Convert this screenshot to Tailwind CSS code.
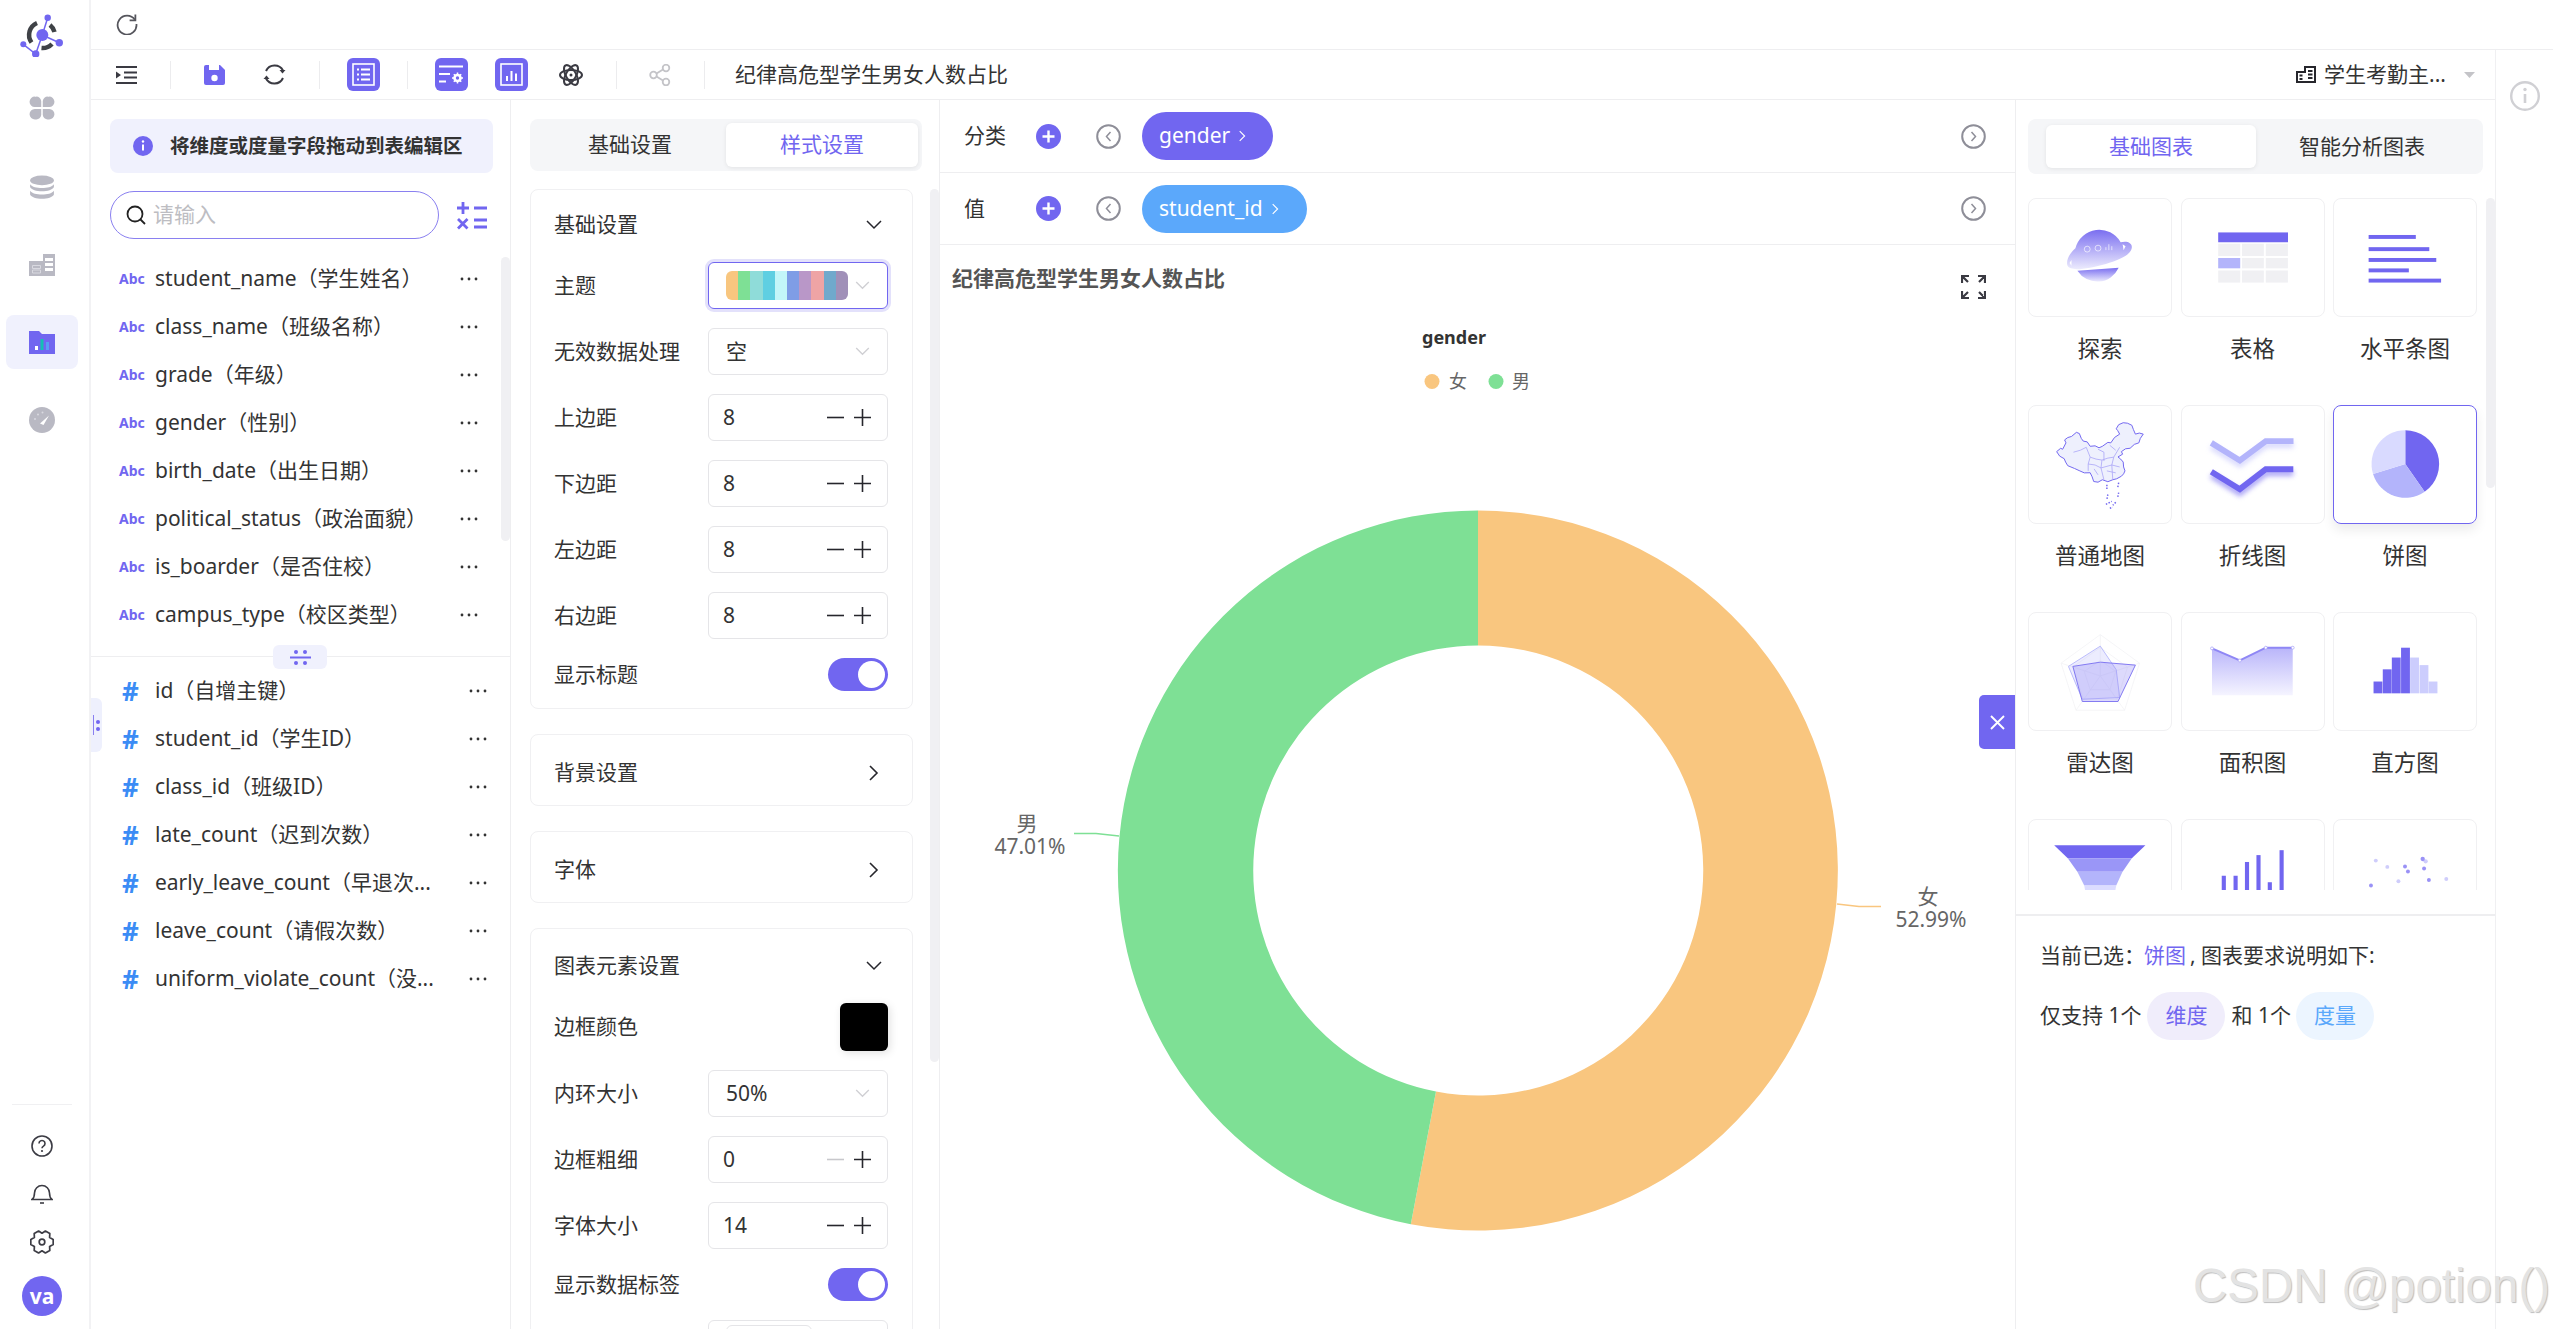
<!DOCTYPE html>
<html lang="zh-CN">
<head>
<meta charset="utf-8">
<title>图表编辑</title>
<script src="https://cdn.jsdelivr.net/npm/@tailwindcss/browser@4"></script>
</head>
<body class="bg-white">
<svg width="0" height="0" class="absolute">
  <defs>
    <symbol id="chev-d" viewBox="0 0 16 10"><path d="M1 1l7 7 7-7" fill="none" stroke="currentColor" stroke-width="1.5"/></symbol>
    <symbol id="chev-r" viewBox="0 0 10 16"><path d="M1 1l7 7-7 7" fill="none" stroke="currentColor" stroke-width="1.6"/></symbol>
    <symbol id="minus" viewBox="0 0 17 17"><path d="M0 8.5h17" stroke="currentColor" stroke-width="1.6"/></symbol>
    <symbol id="plus" viewBox="0 0 17 17"><path d="M0 8.5h17M8.500 0v17" stroke="currentColor" stroke-width="1.6"/></symbol>
    <symbol id="dots" viewBox="0 0 18 4"><circle cx="2" cy="2" r="1.400" fill="currentColor"/><circle cx="9" cy="2" r="1.400" fill="currentColor"/><circle cx="16" cy="2" r="1.400" fill="currentColor"/></symbol>
    <symbol id="add" viewBox="0 0 25 25"><circle cx="12.500" cy="12.500" r="12.500" fill="#7166f0"/><path d="M12.500 6.500v12M6.500 12.500h12" stroke="#fff" stroke-width="2.400"/></symbol>
    <symbol id="circ-l" viewBox="0 0 25 25"><circle cx="12.500" cy="12.500" r="11.300" fill="none" stroke="#8e8e98" stroke-width="2"/><path d="M14.500 8l-4 4.500 4 4.500" fill="none" stroke="#8e8e98" stroke-width="1.500"/></symbol>
    <symbol id="circ-r" viewBox="0 0 25 25"><circle cx="12.500" cy="12.500" r="11.300" fill="none" stroke="#8e8e98" stroke-width="2"/><path d="M10.500 8l4 4.500-4 4.500" fill="none" stroke="#8e8e98" stroke-width="1.500"/></symbol>
    <linearGradient id="planetG" x1="0" y1="0" x2="0" y2="1"><stop offset="0" stop-color="#7a6ef0"/><stop offset="1" stop-color="#ecebfd"/></linearGradient>
    <linearGradient id="areaG" x1="0" y1="0" x2="0" y2="1"><stop offset="0" stop-color="#b9b5fa"/><stop offset="1" stop-color="#f5f4ff"/></linearGradient>
    <filter id="soft" x="-20%" y="-60%" width="140%" height="220%"><feGaussianBlur stdDeviation="2.500"/></filter>
  </defs>
</svg>

<div class="relative flex w-[2553px] h-[1329px] overflow-hidden bg-white text-[21px] text-[#333] font-['Noto_Sans','Noto_Sans_CJK_SC',sans-serif]">

  <!-- sidebar -->
  <aside class="w-[91px] shrink-0 h-full border-r-2 border-[#f2f2f4] pr-[5px] flex flex-col items-center">
    <svg class="mt-[13px] w-[44px] h-[44px]" viewBox="20 13 44 44">
      <path d="M37 23A13 13 0 0 0 31.500 42.500M50 25A13 13 0 0 1 54.500 32M41.500 48A13 13 0 0 0 52 44" fill="none" stroke="#3f4247" stroke-width="4.500"/>
      <path d="M42.300 35L47.700 17.700M42.300 35L59.300 42.700M42.300 35L35.700 54L23.300 44.300" fill="none" stroke="#7166f0" stroke-width="1.500"/>
      <circle cx="42.300" cy="35" r="6" fill="#7166f0"/><circle cx="47.700" cy="17.700" r="3.200" fill="#7166f0"/><circle cx="59.300" cy="42.700" r="3.700" fill="#7166f0"/><circle cx="35.700" cy="54" r="3.700" fill="#7166f0"/><circle cx="23.300" cy="44.300" r="3" fill="#7166f0"/>
    </svg>
    <svg class="mt-[38px] w-[26px] h-[26px]" viewBox="0 0 24 24" fill="#b9b9c3"><path d="M11.300 11V5.500A4.500 4.500 0 0 0 6.500 1.500H5.500A5 5 0 0 0 .5 6.200 4.800 4.800 0 0 0 5.300 11ZM12.700 11V5.500A4.500 4.500 0 0 1 17.500 1.500H18.500A5 5 0 0 1 23.500 6.200 4.800 4.800 0 0 1 18.700 11ZM11.300 13V18.500A4.500 4.500 0 0 1 6.500 22.500H5.500A5 5 0 0 1 .5 17.800 4.800 4.800 0 0 1 5.300 13ZM12.700 13V18.500A4.500 4.500 0 0 0 17.500 22.500H18.500A5 5 0 0 0 23.500 17.800 4.800 4.800 0 0 0 18.700 13Z"/></svg>
    <svg class="mt-[54px] w-[26px] h-[26px]" viewBox="0 0 24 24" fill="#b9b9c3"><ellipse cx="12" cy="5" rx="11" ry="4.500"/><path d="M1 8.500C3 11 7 12 12 12s9-1 11-3.500V11c-1 2.500-6 4-11 4S2 13.500 1 11ZM1 14.500C3 17 7 18 12 18s9-1 11-3.500V18c-1 2.500-6 4-11 4S2 20.500 1 18Z"/></svg>
    <svg class="mt-[53px] w-[26px] h-[22px]" viewBox="0 0 26 22" fill="#b9b9c3"><path d="M0 7h14V0h12v22H0Z"/><path d="M16 4h8v3h-8zM16 9h8v3h-8zM16 14h8v3h-8z" fill="#fff"/><path d="M3.500 11.500h8v3h-8zM3.500 16h8v3h-8z" fill="none" stroke="#d9d9e0" stroke-width="1"/></svg>
    <div class="mt-[39px] w-[72px] h-[54px] rounded-[8px] bg-[#f0f1fd] flex items-center justify-center">
      <svg class="w-[26px] h-[24px]" viewBox="0 0 26 24"><path d="M0 1h10l3 3h13v20H0Z" fill="#7166f0"/><rect x="6" y="16" width="3" height="4" fill="#fff"/><rect x="11.500" y="9" width="3" height="11" fill="#14c0b4"/><rect x="17" y="12" width="3" height="8" fill="#5b9cf5"/></svg>
    </div>
    <svg class="mt-[38px] w-[26px] h-[26px]" viewBox="0 0 26 26"><circle cx="13" cy="13" r="13" fill="#b9b9c3"/><path d="M11 16.500L20 8.500 14.500 18Z" fill="#fff"/><circle cx="6" cy="12" r="1" fill="#d9d9e0"/><circle cx="9" cy="7.500" r="1" fill="#d9d9e0"/><circle cx="13.500" cy="5.500" r="1" fill="#d9d9e0"/></svg>
    <div class="mt-auto w-[60px] border-t border-[#f0f0f2]"></div>
    <svg class="mt-[30px] w-[22px] h-[22px]" viewBox="0 0 22 22"><circle cx="11" cy="11" r="10" fill="none" stroke="#3c3c44" stroke-width="1.600"/><path d="M8 8.500a3 3 0 1 1 4.500 2.600c-1 .6-1.500 1-1.500 2.200" fill="none" stroke="#3c3c44" stroke-width="1.600"/><circle cx="11" cy="16" r="1.100" fill="#3c3c44"/></svg>
    <svg class="mt-[24px] w-[22px] h-[24px]" viewBox="0 0 22 24" fill="none" stroke="#3c3c44" stroke-width="1.600"><path d="M1 18.500c2-1.500 2.500-3 2.500-6.500a7.500 7.500 0 0 1 15 0c0 3.500.5 5 2.500 6.500Z"/><path d="M9 22h4"/></svg>
    <svg class="mt-[25px] w-[24px] h-[24px]" viewBox="0 0 24 24" fill="none" stroke="#3c3c44" stroke-width="1.700" stroke-linejoin="round"><path d="M23.200 9.400V14.600L19.600 16.400 19.800 20.400 15.400 23 12 20.800 8.600 23 4.200 20.400 4.400 16.400 .8 14.600V9.400L4.400 7.600 4.200 3.600 8.600 1 12 3.200 15.400 1 19.800 3.600 19.600 7.600Z"/><circle cx="12" cy="12" r="2.800"/></svg>
    <div class="mt-[22px] mb-[13px] w-[40px] h-[40px] rounded-full bg-[#7166f0] text-white font-bold text-[21px] leading-none flex items-center justify-center">va</div>
  </aside>

  <div class="flex-1 min-w-0 flex flex-col">
    <!-- top strip -->
    <div class="h-[50px] shrink-0 border-b border-[#eeeef0] pl-[25px] flex items-center">
      <svg class="w-[22px] h-[22px] -mt-[2px]" viewBox="0 0 21 21" fill="none" stroke="#55555c" stroke-width="1.700"><path d="M18 6.500A9 9 0 1 0 19.500 10.500"/><path d="M18.500 1.500v5.500h-5.500"/></svg>
    </div>

    <div class="flex-1 min-h-0 flex">
      <div class="w-[2405px] shrink-0 flex flex-col border-r border-[#f0f0f2]">
        <!-- toolbar -->
        <div class="h-[50px] shrink-0 border-b border-[#eeeef0] pl-[25px] pr-[20px] flex items-center">
          <svg class="w-[21px] h-[20px]" viewBox="0 0 21 20" fill="#3a3a42"><path d="M0 1h21v2H0zM8 6.500h13v2H8zM8 11.500h13v2H8zM0 17h21v2H0zM0 6.500L5 10l-5 3.500Z"/></svg>
          <span class="ml-[33px] w-px h-[28px] bg-[#ececee]"></span>
          <svg class="ml-[33px] w-[21px] h-[20px]" viewBox="0 0 21 20"><path d="M2 0h14l5 5v13a2 2 0 0 1-2 2H2a2 2 0 0 1-2-2V2a2 2 0 0 1 2-2Z" fill="#7166f0"/><rect x="5" y="0" width="10" height="5" fill="#fff"/><circle cx="10.500" cy="13" r="3.200" fill="#fff"/></svg>
          <svg class="ml-[38px] w-[23px] h-[23px]" viewBox="0 0 23 23" fill="none" stroke="#3a3a42" stroke-width="2"><path d="M3 8A9.500 9.500 0 0 1 20 7.500M20 15A9.500 9.500 0 0 1 3 15.500"/><path d="M16.500 7h6l-3 3.500Z" fill="#3a3a42" stroke="none"/><path d="M6.500 16h-6l3-3.500Z" fill="#3a3a42" stroke="none"/></svg>
          <span class="ml-[33px] w-px h-[28px] bg-[#ececee]"></span>
          <span class="ml-[27px] w-[33px] h-[33px] rounded-[6px] bg-[#7166f0] flex items-center justify-center">
            <svg class="w-[23px] h-[23px]" viewBox="0 0 23 23" fill="none" stroke="#fff" stroke-width="1.600"><rect x="1" y="1" width="21" height="21"/><path d="M5 6.500h2M9 6.500h9M5 11.500h2M9 11.500h9M5 16.500h2M9 16.500h9" stroke-width="2"/></svg>
          </span>
          <span class="ml-[27px] w-px h-[28px] bg-[#ececee]"></span>
          <span class="ml-[27px] w-[33px] h-[33px] rounded-[6px] bg-[#7166f0] flex items-center justify-center">
            <svg class="w-[25px] h-[20px]" viewBox="0 0 25 20" fill="none" stroke="#fff" stroke-width="2"><path d="M0 1.500h24M0 9h11M0 16.500h7"/><circle cx="18.500" cy="13" r="3" stroke-width="2.600"/><path d="M18.500 7.500v2M18.500 16.500v2M13 13h2M22 13h2M14.800 9.300l1.300 1.300M20.900 15.400l1.300 1.300M14.800 16.700l1.300-1.300M20.900 10.600l1.300-1.300" stroke-width="1.500"/></svg>
          </span>
          <span class="ml-[27px] w-[33px] h-[33px] rounded-[6px] bg-[#7166f0] flex items-center justify-center">
            <svg class="w-[23px] h-[23px]" viewBox="0 0 23 23" fill="none" stroke="#fff" stroke-width="1.600"><rect x="1" y="1" width="21" height="21"/><path d="M7 13v5M11.500 8v10M16 10.500v7.500" stroke-width="2"/></svg>
          </span>
          <svg class="ml-[31px] w-[24px] h-[24px]" viewBox="0 0 24 24" fill="none" stroke="#3a3a42" stroke-width="2"><ellipse cx="12" cy="12" rx="11" ry="5"/><ellipse cx="12" cy="12" rx="11" ry="5" transform="rotate(60 12 12)"/><ellipse cx="12" cy="12" rx="11" ry="5" transform="rotate(120 12 12)"/><circle cx="12" cy="12" r="1.500" fill="#3a3a42" stroke="none"/></svg>
          <span class="ml-[33px] w-px h-[28px] bg-[#ececee]"></span>
          <svg class="ml-[32px] w-[22px] h-[22px]" viewBox="0 0 22 22" fill="none" stroke="#c4c4c8" stroke-width="1.800"><circle cx="4.500" cy="11" r="3.300"/><circle cx="17" cy="4" r="3.300"/><circle cx="17" cy="18" r="3.300"/><path d="M7.500 9.500l6.500-4M7.500 12.500l6.500 4"/></svg>
          <span class="ml-[33px] w-px h-[28px] bg-[#ececee]"></span>
          <span class="ml-[30px]">纪律高危型学生男女人数占比</span>
          <svg class="ml-auto w-[20px] h-[17px]" viewBox="0 0 20 17"><path d="M1 6h8v-5h10v15H1Z" fill="none" stroke="#26262c" stroke-width="2"/><path d="M3.500 9.500h3M3.500 13h3M12 5h4.500M12 8.500h4.500M12 12h4.500" stroke="#26262c" stroke-width="2.200"/></svg>
          <span class="ml-[8px] w-[122px]">学生考勤主...</span>
          <svg class="ml-[18px] w-[11px] h-[6px]" viewBox="0 0 11 6"><path d="M0 0h11L5.500 6Z" fill="#c4c4c8"/></svg>
        </div>

        <div class="flex-1 min-h-0 flex">
          <!-- field panel -->
          <section class="relative w-[420px] shrink-0 border-r border-[#eeeef0]">
            <div class="ml-[19px] mt-[19px] w-[383px] h-[54px] rounded-[8px] bg-[#f0f1fd] flex items-center pl-[23px]">
              <svg class="w-[20px] h-[20px]" viewBox="0 0 20 20"><circle cx="10" cy="10" r="10" fill="#7166f0"/><path d="M10 8.500v6" stroke="#fff" stroke-width="2"/><circle cx="10" cy="5.500" r="1.200" fill="#fff"/></svg>
              <span class="ml-[17px] text-[19.500px] font-bold text-[#333]">将维度或度量字段拖动到表编辑区</span>
            </div>
            <div class="mt-[18px] ml-[19px] flex items-center">
              <div class="w-[329px] h-[48px] rounded-full border-[1.500px] border-[#8a80f0] flex items-center pl-[15px]">
                <svg class="w-[20px] h-[20px]" viewBox="0 0 20 20" fill="none" stroke="#222" stroke-width="1.800"><circle cx="9" cy="9" r="7.500"/><path d="M14.500 14.500L19 19"/></svg>
                <span class="ml-[7px] text-[#bdbdc2]">请输入</span>
              </div>
              <svg class="ml-[18px] w-[30px] h-[29px]" viewBox="0 0 30 29" fill="none" stroke="#7166f0" stroke-width="2.800"><path d="M0 7h12M6 1v12M17 7h13M1 18l9.500 9.500M10.500 18L1 27.500M17 19h13M17 26h13"/></svg>
            </div>

            <div class="mt-[16px]">
              <div class="h-[48px] flex items-center pl-[28px] pr-[32px]"><span class="w-[36px] text-[14px] font-bold text-[#7166f0] leading-none">Abc</span><span class="flex-1 whitespace-nowrap">student_name（学生姓名）</span><svg class="w-[18px] h-[4px] text-[#333]"><use href="#dots"/></svg></div>
              <div class="h-[48px] flex items-center pl-[28px] pr-[32px]"><span class="w-[36px] text-[14px] font-bold text-[#7166f0] leading-none">Abc</span><span class="flex-1 whitespace-nowrap">class_name（班级名称）</span><svg class="w-[18px] h-[4px] text-[#333]"><use href="#dots"/></svg></div>
              <div class="h-[48px] flex items-center pl-[28px] pr-[32px]"><span class="w-[36px] text-[14px] font-bold text-[#7166f0] leading-none">Abc</span><span class="flex-1 whitespace-nowrap">grade（年级）</span><svg class="w-[18px] h-[4px] text-[#333]"><use href="#dots"/></svg></div>
              <div class="h-[48px] flex items-center pl-[28px] pr-[32px]"><span class="w-[36px] text-[14px] font-bold text-[#7166f0] leading-none">Abc</span><span class="flex-1 whitespace-nowrap">gender（性别）</span><svg class="w-[18px] h-[4px] text-[#333]"><use href="#dots"/></svg></div>
              <div class="h-[48px] flex items-center pl-[28px] pr-[32px]"><span class="w-[36px] text-[14px] font-bold text-[#7166f0] leading-none">Abc</span><span class="flex-1 whitespace-nowrap">birth_date（出生日期）</span><svg class="w-[18px] h-[4px] text-[#333]"><use href="#dots"/></svg></div>
              <div class="h-[48px] flex items-center pl-[28px] pr-[32px]"><span class="w-[36px] text-[14px] font-bold text-[#7166f0] leading-none">Abc</span><span class="flex-1 whitespace-nowrap">political_status（政治面貌）</span><svg class="w-[18px] h-[4px] text-[#333]"><use href="#dots"/></svg></div>
              <div class="h-[48px] flex items-center pl-[28px] pr-[32px]"><span class="w-[36px] text-[14px] font-bold text-[#7166f0] leading-none">Abc</span><span class="flex-1 whitespace-nowrap">is_boarder（是否住校）</span><svg class="w-[18px] h-[4px] text-[#333]"><use href="#dots"/></svg></div>
              <div class="h-[48px] flex items-center pl-[28px] pr-[32px]"><span class="w-[36px] text-[14px] font-bold text-[#7166f0] leading-none">Abc</span><span class="flex-1 whitespace-nowrap">campus_type（校区类型）</span><svg class="w-[18px] h-[4px] text-[#333]"><use href="#dots"/></svg></div>
            </div>

            <div class="relative mt-[17px] border-t border-[#eeeef0]">
              <div class="absolute left-[182px] -top-[12px] w-[54px] h-[24px] rounded-[6px] bg-[#f0f1fd] flex items-center justify-center">
                <svg class="w-[21px] h-[15px]" viewBox="0 0 21 15" fill="#7166f0"><circle cx="6" cy="2" r="2"/><circle cx="15" cy="2" r="2"/><rect x="0" y="6.500" width="21" height="2"/><circle cx="6" cy="13" r="2"/><circle cx="15" cy="13" r="2"/></svg>
              </div>
            </div>

            <div class="mt-[10px]">
              <div class="h-[48px] flex items-center pl-[31px] pr-[23px]"><span class="w-[33px] text-[26px] font-bold text-[#3b8cf5] leading-none">#</span><span class="flex-1 whitespace-nowrap">id（自增主键）</span><svg class="w-[18px] h-[4px] text-[#333]"><use href="#dots"/></svg></div>
              <div class="h-[48px] flex items-center pl-[31px] pr-[23px]"><span class="w-[33px] text-[26px] font-bold text-[#3b8cf5] leading-none">#</span><span class="flex-1 whitespace-nowrap">student_id（学生ID）</span><svg class="w-[18px] h-[4px] text-[#333]"><use href="#dots"/></svg></div>
              <div class="h-[48px] flex items-center pl-[31px] pr-[23px]"><span class="w-[33px] text-[26px] font-bold text-[#3b8cf5] leading-none">#</span><span class="flex-1 whitespace-nowrap">class_id（班级ID）</span><svg class="w-[18px] h-[4px] text-[#333]"><use href="#dots"/></svg></div>
              <div class="h-[48px] flex items-center pl-[31px] pr-[23px]"><span class="w-[33px] text-[26px] font-bold text-[#3b8cf5] leading-none">#</span><span class="flex-1 whitespace-nowrap">late_count（迟到次数）</span><svg class="w-[18px] h-[4px] text-[#333]"><use href="#dots"/></svg></div>
              <div class="h-[48px] flex items-center pl-[31px] pr-[23px]"><span class="w-[33px] text-[26px] font-bold text-[#3b8cf5] leading-none">#</span><span class="flex-1 whitespace-nowrap">early_leave_count（早退次...</span><svg class="w-[18px] h-[4px] text-[#333]"><use href="#dots"/></svg></div>
              <div class="h-[48px] flex items-center pl-[31px] pr-[23px]"><span class="w-[33px] text-[26px] font-bold text-[#3b8cf5] leading-none">#</span><span class="flex-1 whitespace-nowrap">leave_count（请假次数）</span><svg class="w-[18px] h-[4px] text-[#333]"><use href="#dots"/></svg></div>
              <div class="h-[48px] flex items-center pl-[31px] pr-[23px]"><span class="w-[33px] text-[26px] font-bold text-[#3b8cf5] leading-none">#</span><span class="flex-1 whitespace-nowrap">uniform_violate_count（没...</span><svg class="w-[18px] h-[4px] text-[#333]"><use href="#dots"/></svg></div>
            </div>

            <!-- overlays -->
            <div class="absolute right-0 top-[157px] w-[9px] h-[284px] rounded-full bg-[#f0f0f3]"></div>
            <div class="absolute left-0 top-[598px] w-[11px] h-[54px] rounded-r-[6px] bg-[#eef0fd] flex items-center pl-[2px] gap-[2px]">
              <span class="w-px h-[20px] bg-[#8a80f0]"></span>
              <span class="flex flex-col gap-[3px]"><span class="w-[4px] h-[4px] rounded-full bg-[#7166f0]"></span><span class="w-[4px] h-[4px] rounded-full bg-[#7166f0]"></span></span>
            </div>
          </section>

          <!-- config panel -->
          <section class="relative w-[429px] shrink-0 overflow-hidden border-r border-[#eeeef0]">
            <div class="ml-[19px] mt-[19px] w-[392px] h-[52px] rounded-[8px] bg-[#f5f6f8] flex items-center p-[4px]">
              <div class="w-[192px] text-center">基础设置</div>
              <div class="ml-auto w-[192px] h-[44px] rounded-[6px] bg-white shadow-[0_1px_4px_rgba(0,0,0,0.08)] flex items-center justify-center text-[#7166f0]">样式设置</div>
            </div>

            <div class="ml-[19px] mt-[18px] w-[383px] rounded-[8px] border border-[#f0f0f2] pl-[23px] pr-[24px] pb-[17px]">
              <div class="h-[70px] mb-[2px] flex items-center justify-between"><span>基础设置</span><svg class="w-[16px] h-[10px] mr-[6px] text-[#26262c]"><use href="#chev-d"/></svg></div>
              <div class="flex flex-col gap-[19px]">
                <div class="flex items-center justify-between"><span>主题</span>
                  <div class="w-[180px] h-[47px] rounded-[6px] border border-[#7166f0] ring-[3px] ring-[#e3e1fb] flex items-center pl-[17px] pr-[17px]">
                    <span class="flex w-[122px] h-[29px] rounded-[6px] overflow-hidden">
                      <span class="flex-1 bg-[#f8c67f]"></span><span class="flex-1 bg-[#7ee095]"></span><span class="flex-1 bg-[#8fdcd9]"></span><span class="flex-1 bg-[#5fcfe2]"></span><span class="flex-1 bg-[#c3f6f9]"></span><span class="flex-1 bg-[#7f9de6]"></span><span class="flex-1 bg-[#b997c8]"></span><span class="flex-1 bg-[#eea4a5]"></span><span class="flex-1 bg-[#70a9cc]"></span><span class="flex-1 bg-[#a090b8]"></span>
                    </span>
                    <svg class="ml-auto w-[15px] h-[9px] text-[#d0d0d4]"><use href="#chev-d"/></svg>
                  </div>
                </div>
                <div class="flex items-center justify-between"><span>无效数据处理</span>
                  <div class="w-[180px] h-[47px] rounded-[6px] border border-[#e5e5e8] flex items-center pl-[17px] pr-[17px]"><span>空</span><svg class="ml-auto w-[15px] h-[9px] text-[#d0d0d4]"><use href="#chev-d"/></svg></div>
                </div>
                <div class="flex items-center justify-between"><span>上边距</span>
                  <div class="w-[180px] h-[47px] rounded-[6px] border border-[#e5e5e8] flex items-center pl-[14px] pr-[16px]"><span class="flex-1">8</span><svg class="w-[17px] h-[17px] text-[#26262c]"><use href="#minus"/></svg><svg class="ml-[10px] w-[17px] h-[17px] text-[#26262c]"><use href="#plus"/></svg></div>
                </div>
                <div class="flex items-center justify-between"><span>下边距</span>
                  <div class="w-[180px] h-[47px] rounded-[6px] border border-[#e5e5e8] flex items-center pl-[14px] pr-[16px]"><span class="flex-1">8</span><svg class="w-[17px] h-[17px] text-[#26262c]"><use href="#minus"/></svg><svg class="ml-[10px] w-[17px] h-[17px] text-[#26262c]"><use href="#plus"/></svg></div>
                </div>
                <div class="flex items-center justify-between"><span>左边距</span>
                  <div class="w-[180px] h-[47px] rounded-[6px] border border-[#e5e5e8] flex items-center pl-[14px] pr-[16px]"><span class="flex-1">8</span><svg class="w-[17px] h-[17px] text-[#26262c]"><use href="#minus"/></svg><svg class="ml-[10px] w-[17px] h-[17px] text-[#26262c]"><use href="#plus"/></svg></div>
                </div>
                <div class="flex items-center justify-between"><span>右边距</span>
                  <div class="w-[180px] h-[47px] rounded-[6px] border border-[#e5e5e8] flex items-center pl-[14px] pr-[16px]"><span class="flex-1">8</span><svg class="w-[17px] h-[17px] text-[#26262c]"><use href="#minus"/></svg><svg class="ml-[10px] w-[17px] h-[17px] text-[#26262c]"><use href="#plus"/></svg></div>
                </div>
                <div class="flex items-center justify-between"><span>显示标题</span>
                  <div class="w-[60px] h-[33px] rounded-full bg-[#7166f0] flex items-center justify-end pr-[3px]"><span class="w-[27px] h-[27px] rounded-full bg-white"></span></div>
                </div>
              </div>
            </div>

            <div class="ml-[19px] mt-[25px] w-[383px] h-[72px] rounded-[8px] border border-[#f0f0f2] pl-[23px] pr-[24px] pt-[5px] flex items-center justify-between"><span>背景设置</span><svg class="w-[10px] h-[16px] mr-[9px] text-[#26262c]"><use href="#chev-r"/></svg></div>
            <div class="ml-[19px] mt-[25px] w-[383px] h-[72px] rounded-[8px] border border-[#f0f0f2] pl-[23px] pr-[24px] pt-[5px] flex items-center justify-between"><span>字体</span><svg class="w-[10px] h-[16px] mr-[9px] text-[#26262c]"><use href="#chev-r"/></svg></div>

            <div class="ml-[19px] mt-[25px] w-[383px] rounded-[8px] border border-[#f0f0f2] pl-[23px] pr-[24px] pb-[17px]">
              <div class="h-[74px] flex items-center justify-between"><span>图表元素设置</span><svg class="w-[16px] h-[10px] mr-[6px] text-[#26262c]"><use href="#chev-d"/></svg></div>
              <div class="flex flex-col gap-[19px]">
                <div class="flex items-center justify-between"><span>边框颜色</span><div class="w-[48px] h-[48px] rounded-[6px] bg-black shadow-[2px_2px_8px_rgba(0,0,0,0.12)]"></div></div>
                <div class="flex items-center justify-between"><span>内环大小</span>
                  <div class="w-[180px] h-[47px] rounded-[6px] border border-[#e5e5e8] flex items-center pl-[17px] pr-[17px]"><span>50%</span><svg class="ml-auto w-[15px] h-[9px] text-[#d0d0d4]"><use href="#chev-d"/></svg></div>
                </div>
                <div class="flex items-center justify-between"><span>边框粗细</span>
                  <div class="w-[180px] h-[47px] rounded-[6px] border border-[#e5e5e8] flex items-center pl-[14px] pr-[16px]"><span class="flex-1">0</span><svg class="w-[17px] h-[17px] text-[#c8c8cc]"><use href="#minus"/></svg><svg class="ml-[10px] w-[17px] h-[17px] text-[#26262c]"><use href="#plus"/></svg></div>
                </div>
                <div class="flex items-center justify-between"><span>字体大小</span>
                  <div class="w-[180px] h-[47px] rounded-[6px] border border-[#e5e5e8] flex items-center pl-[14px] pr-[16px]"><span class="flex-1">14</span><svg class="w-[17px] h-[17px] text-[#26262c]"><use href="#minus"/></svg><svg class="ml-[10px] w-[17px] h-[17px] text-[#26262c]"><use href="#plus"/></svg></div>
                </div>
                <div class="flex items-center justify-between"><span>显示数据标签</span>
                  <div class="w-[60px] h-[33px] rounded-full bg-[#7166f0] flex items-center justify-end pr-[3px]"><span class="w-[27px] h-[27px] rounded-full bg-white"></span></div>
                </div>
                <div class="flex justify-end"><div class="w-[180px] h-[47px] rounded-[6px] border border-[#e5e5e8] pl-[17px] pt-[4px]"><div class="w-[86px] h-[30px] rounded-[6px] border border-[#e5e5e8]"></div></div></div>
              </div>
            </div>

            <div class="absolute right-0 top-[89px] w-[9px] h-[873px] rounded-full bg-[#f0f0f3]"></div>
          </section>

          <!-- chart panel -->
          <section class="w-[1076px] shrink-0 flex flex-col border-r border-[#eeeef0]">
            <div class="h-[73px] shrink-0 border-b border-[#eeeef0] flex items-center pl-[24px] pr-[29px]">
              <span class="w-[72px]">分类</span>
              <svg class="w-[25px] h-[25px]"><use href="#add"/></svg>
              <svg class="ml-[35px] w-[25px] h-[25px]"><use href="#circ-l"/></svg>
              <div class="ml-[21px] h-[48px] w-[131px] rounded-full bg-[#7166f0] text-white flex items-center pl-[17px]">gender<svg class="ml-[9px] w-[7px] h-[12px] text-white"><use href="#chev-r"/></svg></div>
              <svg class="ml-auto w-[25px] h-[25px]"><use href="#circ-r"/></svg>
            </div>
            <div class="h-[72px] shrink-0 border-b border-[#eeeef0] flex items-center pl-[24px] pr-[29px]">
              <span class="w-[72px]">值</span>
              <svg class="w-[25px] h-[25px]"><use href="#add"/></svg>
              <svg class="ml-[35px] w-[25px] h-[25px]"><use href="#circ-l"/></svg>
              <div class="ml-[21px] h-[48px] w-[165px] rounded-full bg-[#5ba8fb] text-white flex items-center pl-[17px]">student_id<svg class="ml-[9px] w-[7px] h-[12px] text-white"><use href="#chev-r"/></svg></div>
              <svg class="ml-auto w-[25px] h-[25px]"><use href="#circ-r"/></svg>
            </div>
            <div class="relative flex-1 min-h-0">
              <svg class="absolute left-0 top-0 w-[1075px] h-[1084px]" viewBox="941 245 1075 1084" style="font-family:'Noto Sans','Noto Sans CJK SC',sans-serif">
                <g transform="translate(1 0.500)">
                  <path d="M1478 510A360 360 0 1 1 1410.800 1223.700L1436 1091A225 225 0 1 0 1478 645Z" fill="#f9c67f"/>
                  <path d="M1410.800 1223.700A360 360 0 0 1 1478 510L1478 645A225 225 0 0 0 1436 1091Z" fill="#7ee095"/>
                </g>
                <path d="M1838 904L1860 906.500H1882" fill="none" stroke="#f9c67f" stroke-width="1.500"/>
                <path d="M1120 836L1097 833.500H1075" fill="none" stroke="#7ee095" stroke-width="1.500"/>
                <text x="1455" y="344" text-anchor="middle" font-size="18" font-weight="700" fill="#333">gender</text>
                <circle cx="1433" cy="381.500" r="7.500" fill="#f9c67f"/>
                <text x="1450" y="388" font-size="18" fill="#666">女</text>
                <circle cx="1497" cy="381.500" r="7.500" fill="#7ee095"/>
                <text x="1513" y="388" font-size="18" fill="#666">男</text>
                <text x="1929" y="904" text-anchor="middle" font-size="21" fill="#666">女</text>
                <text x="1932" y="927" text-anchor="middle" font-size="21" fill="#666">52.99%</text>
                <text x="1028" y="831" text-anchor="middle" font-size="21" fill="#666">男</text>
                <text x="1031" y="854" text-anchor="middle" font-size="21" fill="#666">47.01%</text>
              </svg>
              <div class="relative flex items-start justify-between pl-[12px] pr-[29px] pt-[18px]">
                <span class="font-bold text-[#555]">纪律高危型学生男女人数占比</span>
                <svg class="mt-[12px] w-[25px] h-[24px]" viewBox="0 0 25 24" fill="none" stroke="#3a3a42" stroke-width="2.200"><path d="M1 8V1h7M1 1l6 6M24 8V1h-7M24 1l-6 6M1 16v7h7M1 23l6-6M24 16v7h-7M24 23l-6-6"/></svg>
              </div>
              <div class="absolute right-0 top-[450px] w-[36px] h-[54px] rounded-l-[5px] bg-[#7166f0] flex items-center justify-center">
                <svg class="w-[15px] h-[15px]" viewBox="0 0 15 15"><path d="M1 1l13 13M14 1L1 14" stroke="#fff" stroke-width="1.900"/></svg>
              </div>
            </div>
          </section>

          <!-- chart type panel -->
          <section class="relative flex-1 min-w-0 flex flex-col">
            <div class="ml-[12px] mt-[19px] w-[455px] h-[55px] shrink-0 rounded-[8px] bg-[#f5f6f8] flex items-center pl-[18px]">
              <div class="w-[210px] h-[43px] rounded-[6px] bg-white shadow-[0_1px_4px_rgba(0,0,0,0.08)] flex items-center justify-center text-[#7166f0]">基础图表</div>
              <div class="flex-1 text-center pr-[15px]">智能分析图表</div>
            </div>

            <div class="ml-[12px] mt-[24px] h-[692px] shrink-0 overflow-hidden grid grid-cols-[144px_144px_144px] gap-x-[8.500px] content-start text-[22.500px]">
              <div class="h-[207px] text-center">
                <div class="h-[119px] rounded-[8px] border border-[#f0f0f2]"><svg class="w-full h-full" viewBox="0 0 144 119">
                  <path d="M49 73a24 24 0 0 0 42-3z" fill="url(#planetG)"/>
                  <path d="M47 50A25 25 0 0 1 93 44C100 42 106 45 104 51 102 57 92 62 78 66 60 71 42 74 39 68 37 63 41 55 47 50Z" fill="url(#planetG)"/>
                  <circle cx="59" cy="51" r="3" fill="none" stroke="#fff" stroke-width="0.800" opacity=".8"/><circle cx="70" cy="50" r="3" fill="none" stroke="#fff" stroke-width="0.800" opacity=".8"/><path d="M78 52v-3M81 52v-6M84 52v-4" stroke="#fff" stroke-width="0.800" opacity=".8"/>
                  <path d="M43 62l-2 3 2 3ZM95 46l3 2-2 4Z" fill="#fff"/>
                </svg></div>
                <div class="h-[64px] flex items-center justify-center">探索</div>
              </div>
              <div class="h-[207px] text-center">
                <div class="h-[119px] rounded-[8px] border border-[#f0f0f2]"><svg class="w-full h-full" viewBox="0 0 144 119">
                  <rect x="36.600" y="34" width="71" height="10" fill="#7166f0"/>
                  <g fill="#f0f0f3"><rect x="36.600" y="45.500" width="22.400" height="12.500"/><rect x="60.800" y="45.500" width="22.200" height="12.500"/><rect x="85" y="45.500" width="22.500" height="12.500"/><rect x="60.800" y="60" width="22.200" height="10.500"/><rect x="85" y="60" width="22.500" height="10.500"/><rect x="36.600" y="72.700" width="22.400" height="12.300"/><rect x="60.800" y="72.700" width="22.200" height="12.300"/><rect x="85" y="72.700" width="22.500" height="12.300"/></g>
                  <rect x="36.600" y="60" width="22.400" height="10.500" fill="#b3b4fb"/>
                </svg></div>
                <div class="h-[64px] flex items-center justify-center">表格</div>
              </div>
              <div class="h-[207px] text-center">
                <div class="h-[119px] rounded-[8px] border border-[#f0f0f2]"><svg class="w-full h-full" viewBox="0 0 144 119" fill="#7166f0">
                  <rect x="35" y="36.600" width="48" height="4"/><rect x="35" y="49" width="61.700" height="4"/><rect x="35" y="60" width="68.800" height="4"/><rect x="35" y="70.600" width="40.900" height="4"/><rect x="35" y="81" width="73.700" height="4"/>
                </svg></div>
                <div class="h-[64px] flex items-center justify-center">水平条图</div>
              </div>

              <div class="h-[207px] text-center">
                <div class="h-[119px] rounded-[8px] border border-[#f0f0f2]"><svg class="w-full h-full" viewBox="0 0 144 119">
                  <path d="M27.900 46.400L32 43 34 44 37.400 37.500 36 34.500 39.200 32.100 43 31 48 26.800 51 28 53 33 55 35.700 59 36.500 62 41 67 40.500 71 42.500 74.400 41 80 37 83 37.500 86.800 32 92 28.600 90 25 88.500 23.200 91 19 95.600 17 100 17.500 104.400 19.600 106 24 108 28.600 112 27.500 116 28.600 113 33 111.500 37.500 107 39 102.600 43 98 43.500 93.800 46.400 95 49 90.300 51.800 93 54 95.600 57 96 62 97.400 66 96 69 93.800 71.400 89 74 85 75 80 77 74.400 75 70 77.500 65.600 76.800 64 72 62 67.900 56 68 51.500 66 46 63.500 39.200 60.700 37 57 35.600 53.600 31 51Z" fill="#eef0fd" stroke="#7166f0" stroke-width="1"/>
                  <path d="M45 47L52 45 58 42 62 52 68 54 74 55 80 53 86 52 92 42M62 52L60 59 60 66M74 55L73 63 76 75M86 52L84 60 85 75M60 59L67 60 73 63 84 60 92 62M70 44L76 47 76 56M82 40L88 45M66 64L70 70M79 66L88 68" fill="none" stroke="#a9a5f7" stroke-width="0.800"/>
                  <path d="M79 80v5M91 78l-1 5M80 90l-1 5M91 88l-1 5M78 100l6-3M88 98l-3 3M82 104l3-1" fill="none" stroke="#7166f0" stroke-width="1.500" stroke-dasharray="1.500 1.500"/>
                </svg></div>
                <div class="h-[64px] flex items-center justify-center">普通地图</div>
              </div>
              <div class="h-[207px] text-center">
                <div class="h-[119px] rounded-[8px] border border-[#f0f0f2]"><svg class="w-full h-full" viewBox="0 0 144 119" fill="none" stroke-width="6">
                  <path d="M29.600 41.500L58.600 59.400 85 39.700H113.200" stroke="#b3b4fb" opacity=".5" filter="url(#soft)"/>
                  <path d="M29.600 70.800L58.600 88.600 85 68.300H113" stroke="#7166f0" opacity=".6" filter="url(#soft)"/>
                  <path d="M29.600 37.500L58.600 55.400 85 35.700H113.200" stroke="#b3b4fb"/>
                  <path d="M29.600 66.800L58.600 84.600 85 64.300H113" stroke="#7166f0"/>
                </svg></div>
                <div class="h-[64px] flex items-center justify-center">折线图</div>
              </div>
              <div class="h-[207px] text-center">
                <div class="h-[119px] rounded-[8px] border border-[#7166f0] shadow-[0_6px_12px_rgba(0,0,0,0.08)]"><svg class="w-full h-full" viewBox="0 0 144 119">
                  <path d="M72.300 59V24.600A34.400 34.400 0 0 1 92 87.200Z" fill="#7166f0"/>
                  <path d="M72.300 59L92 87.200A34.400 34.400 0 0 1 39.500 69.200Z" fill="#b3b4fb"/>
                  <path d="M72.300 59L39.500 69.200A34.400 34.400 0 0 1 72.300 24.600Z" fill="#d9daff"/>
                </svg></div>
                <div class="h-[64px] flex items-center justify-center">饼图</div>
              </div>

              <div class="h-[207px] text-center">
                <div class="h-[119px] rounded-[8px] border border-[#f0f0f2]"><svg class="w-full h-full" viewBox="0 0 144 119">
                  <g fill="none" stroke="#f2f2f5" stroke-width="0.800"><path d="M72.300 22L112.200 51 97 98.900H47.600L32.400 51Z"/><path d="M72.300 35L100 55 89.500 88H55L44.500 55Z"/><path d="M72.300 48L88 59.500 82 78H62L56 59.500Z"/><path d="M72.300 64V22M72.300 64L112.200 51M72.300 64L97 98.900M72.300 64L47.600 98.900M72.300 64L32.400 51"/></g>
                  <path d="M72.300 33.700L88.500 57.700 92 86 54 87.700 39.900 54.300Z" fill="#b3b4fb" fill-opacity=".25" stroke="#b3b4fb" stroke-width="0.900"/>
                  <path d="M44.400 54.300L72.300 50 108 53 90.300 90H54Z" fill="#8e85f5" fill-opacity=".3" stroke="#8177f2" stroke-width="1"/>
                </svg></div>
                <div class="h-[64px] flex items-center justify-center">雷达图</div>
              </div>
              <div class="h-[207px] text-center">
                <div class="h-[119px] rounded-[8px] border border-[#f0f0f2]"><svg class="w-full h-full" viewBox="0 0 144 119">
                  <path d="M30.300 36L58.600 48.300 85 35.300H112.400V83.700H30.300Z" fill="url(#areaG)"/>
                  <path d="M30.300 36L58.600 48.300 85 35.300H112.400" fill="none" stroke="#8f87f5" stroke-width="2"/>
                  <g fill="#fff" stroke="#a6a1f8" stroke-width="0.700"><circle cx="30.300" cy="36" r="1.500"/><circle cx="58.600" cy="48.300" r="1.500"/><circle cx="85" cy="35.300" r="1.500"/><circle cx="112.400" cy="35.300" r="1.500"/></g>
                </svg></div>
                <div class="h-[64px] flex items-center justify-center">面积图</div>
              </div>
              <div class="h-[207px] text-center">
                <div class="h-[119px] rounded-[8px] border border-[#f0f0f2]"><svg class="w-full h-full" viewBox="0 0 144 119">
                  <g fill="#7166f0"><rect x="40" y="69.700" width="9" height="12"/><rect x="49.400" y="57.300" width="9" height="24.400"/><rect x="58.600" y="45.300" width="9" height="36.400"/><rect x="68" y="35.300" width="9" height="46.400"/></g>
                  <g fill="#cccdfd"><rect x="77.200" y="45.300" width="9" height="36.400"/><rect x="86.800" y="53" width="9" height="28.700"/><rect x="96" y="69.700" width="9" height="12"/></g>
                </svg></div>
                <div class="h-[64px] flex items-center justify-center">直方图</div>
              </div>

              <div class="h-[207px] text-center">
                <div class="h-[119px] rounded-[8px] border border-[#f0f0f2]"><svg class="w-full h-full" viewBox="0 0 144 119">
                  <path d="M25.400 25.700H118.200L104.400 39H39.200Z" fill="#7166f0"/>
                  <path d="M39.200 39H104.400L94.900 52.700H49Z" fill="#9a96f7"/>
                  <path d="M49 52.700H94.900L88.500 66.700H56Z" fill="#b3b4fb"/>
                  <path d="M56 66.700H88.500L87 75H57.500Z" fill="#dcdcff"/>
                </svg></div>
              </div>
              <div class="h-[207px] text-center">
                <div class="h-[119px] rounded-[8px] border border-[#f0f0f2]"><svg class="w-full h-full" viewBox="0 0 144 119" fill="#7166f0">
                  <rect x="40.200" y="56.700" width="4.200" height="30"/><rect x="52.200" y="56.700" width="4.200" height="30"/><rect x="63.800" y="42.700" width="4.200" height="40"/><rect x="75.500" y="35.700" width="4.200" height="50"/><rect x="87" y="63.300" width="4.200" height="20"/><rect x="99" y="30.700" width="4.200" height="60"/>
                </svg></div>
              </div>
              <div class="h-[207px] text-center">
                <div class="h-[119px] rounded-[8px] border border-[#f0f0f2]"><svg class="w-full h-full" viewBox="0 0 144 119">
                  <g fill="#cfcdfb"><circle cx="42.300" cy="41.300" r="2"/><circle cx="54" cy="47.700" r="2"/><circle cx="93" cy="42" r="2.200"/><circle cx="114" cy="60" r="2"/><circle cx="65.300" cy="62.300" r="2"/></g>
                  <g fill="#9a92f6"><circle cx="72" cy="47.300" r="2"/><circle cx="75" cy="52.300" r="2"/><circle cx="90" cy="39.700" r="2.200"/><circle cx="91.400" cy="49.300" r="2"/><circle cx="96.300" cy="61" r="2"/><circle cx="37.400" cy="66.700" r="2"/></g>
                </svg></div>
              </div>
            </div>

            <div class="mt-[24px] flex-1 border-t-2 border-[#eeeef0] pl-[24px]">
              <div class="mt-[18px] h-[44px] flex items-center whitespace-nowrap">当前已选：<span class="text-[#7166f0] -ml-[1px]">饼图</span><span class="ml-[4px]">, 图表要求说明如下:</span></div>
              <div class="mt-[14px] flex items-center whitespace-nowrap">
                <span>仅支持 1个</span>
                <span class="ml-[6px] w-[78px] h-[48px] rounded-full bg-[#f0edfb] text-[#7166f0] flex items-center justify-center">维度</span>
                <span class="ml-[6px]">和 1个</span>
                <span class="ml-[5px] w-[78px] h-[48px] rounded-full bg-[#ecf5ff] text-[#5ba8fb] flex items-center justify-center">度量</span>
              </div>
            </div>

            <div class="absolute right-0 top-[98px] w-[9px] h-[290px] rounded-full bg-[#f0f0f3]"></div>
          </section>
        </div>
      </div>

      <!-- right strip -->
      <div class="flex-1 flex justify-center pt-[31px]">
        <svg class="w-[30px] h-[30px]" viewBox="0 0 30 30"><circle cx="15" cy="15" r="13.800" fill="none" stroke="#d0d0d4" stroke-width="2.400"/><path d="M15 13v9" stroke="#d0d0d4" stroke-width="2.600"/><circle cx="15" cy="8.500" r="1.700" fill="#d0d0d4"/></svg>
      </div>
    </div>
  </div>

  <div class="absolute left-[2193px] top-[1258px] text-[47.500px] leading-[56px] whitespace-nowrap text-[#e3e3e3] [text-shadow:1px_1px_1px_#bdbdbd] font-['Liberation_Sans',sans-serif]">CSDN @potion()</div>
</div>
</body>
</html>
